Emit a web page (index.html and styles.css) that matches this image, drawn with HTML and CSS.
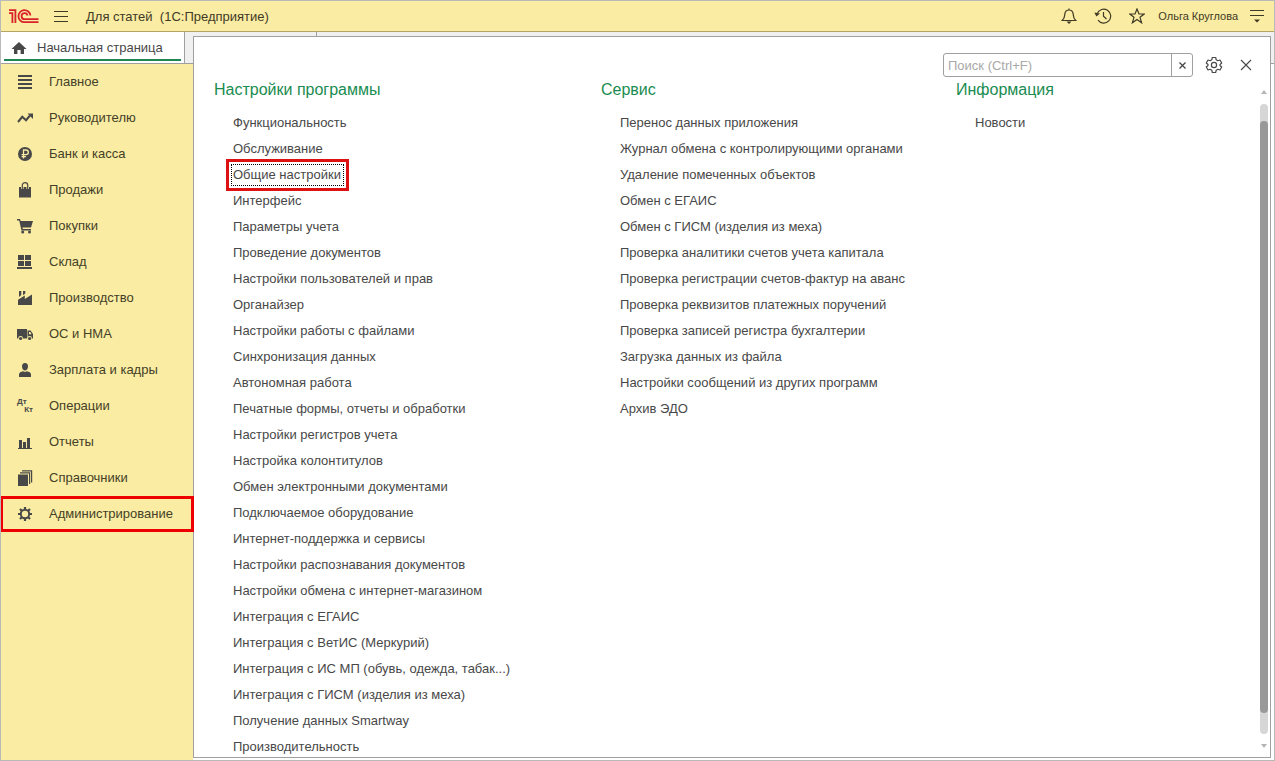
FILE: index.html
```html
<!DOCTYPE html>
<html lang="ru">
<head>
<meta charset="utf-8">
<title>Для статей (1С:Предприятие)</title>
<link rel="stylesheet" href="styles.css">
</head>
<body>
<div class="app">
  <header class="topbar">
    <svg class="logo" width="30" height="16" viewBox="0 0 30 16" fill="none" stroke="#d8232a" stroke-width="1.8">
      <path d="M0 5.200H3.400V15M0 2.200H6.400V15"/>
      <path d="M21.400 7.500A6 6 0 1 0 15.500 14.200H29.500"/>
      <path d="M18.500 7.500A3 3 0 1 0 15.500 11.200H29.500"/>
    </svg>
    <button class="icon-btn menu-btn" aria-label="Меню">
      <svg width="16" height="14" viewBox="0 0 16 14" stroke="#3f3a26" stroke-width="1"><path d="M1 1.500H15M1 6.500H15M1 11.500H15"/></svg>
    </button>
    <h1 class="title">Для статей&nbsp; (1С:Предприятие)</h1>
    <div class="tools">
      <button class="icon-btn" aria-label="Уведомления">
        <svg width="16" height="16" viewBox="0 0 16 16" fill="none" stroke="#3f3a26" stroke-width="1.200"><path d="M8 .5V2M1.300 12.500C3.200 10.800 3.600 9.500 3.800 6.400 4 3.400 5.800 2 8 2s4 1.400 4.200 4.400c.2 3.100.6 4.400 2.500 6.100Z"/><path d="M5.500 13.500H10.500L8 16Z" fill="#3f3a26" stroke="none"/></svg>
      </button>
      <button class="icon-btn" aria-label="История">
        <svg width="18" height="16" viewBox="0 0 18 16" fill="none" stroke="#3f3a26" stroke-width="1.200"><path d="M3.200 5.500A7 7 0 1 1 4 12.200M9.500 4V8.300L12.500 11"/><path d="M.3 4.600 6 5.400 2.400 8.600Z" fill="#3f3a26" stroke="none"/></svg>
      </button>
      <button class="icon-btn" aria-label="Избранное">
        <svg width="16" height="16" viewBox="0 0 16 16" fill="none" stroke="#3f3a26" stroke-width="1.200"><path d="M8 1 10 6H15.200L11 9.300 12.600 14.800 8 11.500 3.400 14.800 5 9.300.8 6H6Z"/></svg>
      </button>
      <a class="user" href="#">Ольга Круглова</a>
      <button class="icon-btn" aria-label="Сервис и настройки">
        <svg width="16" height="14" viewBox="0 0 16 14"><path d="M1 1.500H15M1 6.500H15" stroke="#3f3a26"/><path d="M5 10.500H11L8 13.500Z" fill="#3f3a26"/></svg>
      </button>
    </div>
  </header>

  <div class="workspace">
    <div class="tabs">
      <a class="tab" href="#">
        <svg width="16" height="14" viewBox="0 0 16 14" fill="#484848"><path d="M8 1 15.500 8H13V13H9.600V9H6.400V13H3V8H.5Z"/></svg>
        <span>Начальная страница</span>
      </a>
      <div class="tab-rest"></div>
    </div>

    <nav class="sidebar">
      <a class="nav-item" href="#"><svg class="nav-icon" viewBox="0 0 16 16"><path d="M1 1h14v2H1zM1 5h14v2H1zM1 9h14v2H1zM1 13h14v2H1z"/></svg>Главное</a>
      <a class="nav-item" href="#"><svg class="nav-icon" viewBox="0 0 16 16"><path d="M1 12 5.300 6.800 9 10.200 13 5.500" fill="none" stroke="#484848" stroke-width="2"/><path d="M10.500 3.500H16V9Z"/></svg>Руководителю</a>
      <a class="nav-item" href="#"><svg class="nav-icon" viewBox="0 0 16 16"><circle cx="8" cy="8" r="7"/><path d="M6.500 12.500V4H9a2.200 2.200 0 0 1 0 4.700H4.600M4.600 10.700H9" fill="none" stroke="#faeca2" stroke-width="1.300"/></svg>Банк и касса</a>
      <a class="nav-item" href="#"><svg class="nav-icon" viewBox="0 0 16 16"><path d="M2 5H14V15.500H2Z"/><path d="M5.300 7V3.500a2.600 2.600 0 0 1 5.400 0V7" fill="none" stroke="#faeca2" stroke-width="2.600"/><path d="M5.300 7V3.300a2.600 2.600 0 0 1 5.400 0V7" fill="none" stroke="#484848" stroke-width="1.200"/></svg>Продажи</a>
      <a class="nav-item" href="#"><svg class="nav-icon" viewBox="0 0 16 16"><path d="M0 1H3L3.700 3H16L14 9.500H5.500L5.800 11H14V12.400H4.500L2.200 2.400H0Z"/><circle cx="5.700" cy="14" r="1.500"/><circle cx="12.500" cy="14" r="1.500"/></svg>Покупки</a>
      <a class="nav-item" href="#"><svg class="nav-icon" viewBox="0 0 16 16"><path d="M1 1h6v5H1zM8 1h6v5H8zM1 7h6v5H1zM8 7h6v5H8zM0 13h15v2H0z"/></svg>Склад</a>
      <a class="nav-item" href="#"><svg class="nav-icon" viewBox="0 0 16 16"><path d="M1 15V9.800L7.800 5.500V9L15 4.500V15ZM2 1H4.300V5L2 7ZM6 1H8.300V3.500L6 5.200Z"/></svg>Производство</a>
      <a class="nav-item" href="#"><svg class="nav-icon" viewBox="0 0 16 16"><path d="M0 3H10V12.500H0ZM10.500 4.500H13.600L16 8V12.500H10.500Z"/><path d="M12 6H13.300L14.600 8.200H12Z" fill="#faeca2"/><circle cx="3.600" cy="12.500" r="2.400" fill="#faeca2"/><circle cx="12.600" cy="12.500" r="2.400" fill="#faeca2"/><circle cx="3.600" cy="12.500" r="1.600"/><circle cx="12.600" cy="12.500" r="1.600"/></svg>ОС и НМА</a>
      <a class="nav-item" href="#"><svg class="nav-icon" viewBox="0 0 16 16"><path d="M8 1C10 1 11 2.300 11 4.300 11 6.800 9.700 8.500 8 8.500S5 6.800 5 4.300C5 2.300 6 1 8 1ZM2 15V12.500C2 10.500 4 9.600 6 9.200L8 10 10 9.200C12 9.600 14 10.500 14 12.500V15Z"/></svg>Зарплата и кадры</a>
      <a class="nav-item" href="#"><span class="nav-icon dtkt"><b>Дт</b><b class="kt">Кт</b></span>Операции</a>
      <a class="nav-item" href="#"><svg class="nav-icon" viewBox="0 0 16 16"><path d="M1 14h14v1H1zM2 6h3v9H2zM6 8h3v7H6zM10 4h3v11h-3z"/></svg>Отчеты</a>
      <a class="nav-item" href="#"><svg class="nav-icon" viewBox="0 0 16 16"><path d="M1 4.500h10V16H1z"/><path d="M3 2.900H12.600V14M5 .9H14.600V12.500" fill="none" stroke="#484848" stroke-width="1.200"/></svg>Справочники</a>
      <a class="nav-item marked" href="#"><svg class="nav-icon" viewBox="0 0 16 16"><circle cx="8" cy="8" r="4.200" fill="none" stroke="#484848" stroke-width="2"/><path d="M8 1V4M8 12V15M1 8H4M12 8H15M3 3 5 5M11 11 13 13M13 3 11 5M5 11 3 13" stroke="#484848" stroke-width="2.200"/></svg>Администрирование</a>
    </nav>

    <main class="panel">
      <div class="panel-tools">
        <form class="search">
          <input type="text" placeholder="Поиск (Ctrl+F)" aria-label="Поиск">
          <button type="button" class="clear" aria-label="Очистить"><svg width="7" height="7" viewBox="0 0 7 7" stroke="#444" stroke-width="1.200"><path d="M.5.5 6.500 6.500M6.500.5.5 6.500"/></svg></button>
        </form>
        <button class="icon-btn" aria-label="Настройки">
          <svg width="18" height="18" viewBox="0 0 18 18" fill="none" stroke="#484848" stroke-width="1.200" stroke-linejoin="round"><path d="M7.300 1.500H10.700L11.200 3.800 12.800 4.700 15 4 16.700 7 15 8.500V9.500L16.700 11 15 14 12.800 13.300 11.200 14.200 10.700 16.500H7.300L6.800 14.200 5.200 13.300 3 14 1.300 11 3 9.500V8.500L1.300 7 3 4 5.200 4.700 6.800 3.800Z"/><circle cx="9" cy="9" r="2.600"/></svg>
        </button>
        <button class="icon-btn" aria-label="Закрыть">
          <svg width="12" height="12" viewBox="0 0 12 12" stroke="#484848" stroke-width="1.100"><path d="M1 1 11 11M11 1 1 11"/></svg>
        </button>
      </div>
      <div class="columns">
        <section>
          <h2>Настройки программы</h2>
          <ul>
            <li><a href="#">Функциональность</a></li>
            <li><a href="#">Обслуживание</a></li>
            <li><a class="focused" href="#">Общие настройки</a></li>
            <li><a href="#">Интерфейс</a></li>
            <li><a href="#">Параметры учета</a></li>
            <li><a href="#">Проведение документов</a></li>
            <li><a href="#">Настройки пользователей и прав</a></li>
            <li><a href="#">Органайзер</a></li>
            <li><a href="#">Настройки работы с файлами</a></li>
            <li><a href="#">Синхронизация данных</a></li>
            <li><a href="#">Автономная работа</a></li>
            <li><a href="#">Печатные формы, отчеты и обработки</a></li>
            <li><a href="#">Настройки регистров учета</a></li>
            <li><a href="#">Настройка колонтитулов</a></li>
            <li><a href="#">Обмен электронными документами</a></li>
            <li><a href="#">Подключаемое оборудование</a></li>
            <li><a href="#">Интернет-поддержка и сервисы</a></li>
            <li><a href="#">Настройки распознавания документов</a></li>
            <li><a href="#">Настройки обмена с интернет-магазином</a></li>
            <li><a href="#">Интеграция с ЕГАИС</a></li>
            <li><a href="#">Интеграция с ВетИС (Меркурий)</a></li>
            <li><a href="#">Интеграция с ИС МП (обувь, одежда, табак...)</a></li>
            <li><a href="#">Интеграция с ГИСМ (изделия из меха)</a></li>
            <li><a href="#">Получение данных Smartway</a></li>
            <li><a href="#">Производительность</a></li>
          </ul>
        </section>
        <section>
          <h2>Сервис</h2>
          <ul>
            <li><a href="#">Перенос данных приложения</a></li>
            <li><a href="#">Журнал обмена с контролирующими органами</a></li>
            <li><a href="#">Удаление помеченных объектов</a></li>
            <li><a href="#">Обмен с ЕГАИС</a></li>
            <li><a href="#">Обмен с ГИСМ (изделия из меха)</a></li>
            <li><a href="#">Проверка аналитики счетов учета капитала</a></li>
            <li><a href="#">Проверка регистрации счетов-фактур на аванс</a></li>
            <li><a href="#">Проверка реквизитов платежных поручений</a></li>
            <li><a href="#">Проверка записей регистра бухгалтерии</a></li>
            <li><a href="#">Загрузка данных из файла</a></li>
            <li><a href="#">Настройки сообщений из других программ</a></li>
            <li><a href="#">Архив ЭДО</a></li>
          </ul>
        </section>
        <section>
          <h2>Информация</h2>
          <ul>
            <li><a href="#">Новости</a></li>
          </ul>
        </section>
        <div class="scroll">
          <svg width="6" height="4" viewBox="0 0 6 4"><path d="M3 0 6 4H0Z" fill="#b5b5b5"/></svg>
          <div class="track"><div class="thumb"></div></div>
          <svg width="6" height="4" viewBox="0 0 6 4"><path d="M0 0H6L3 4Z" fill="#b5b5b5"/></svg>
        </div>
      </div>
    </main>
  </div>
</div>
</body>
</html>
```
FILE: styles.css
```css
* { box-sizing: border-box; }
body {
  margin: 0;
  font-family: "Liberation Sans", Arial, sans-serif;
  font-size: 13px;
  color: #484848;
}
a { color: inherit; text-decoration: none; }
.app {
  display: flex;
  flex-direction: column;
  height: 100vh;
  border: 1px solid #b9b9b9;
  overflow: hidden;
}
.icon-btn {
  display: flex;
  padding: 0;
  border: 0;
  background: none;
}
.topbar {
  display: flex;
  align-items: center;
  flex: none;
  height: 31px;
  padding: 0 9px 0 8px;
  background: #faeca2;
  border-bottom: 1px solid #b3a568;
  color: #3f3a26;
}
.menu-btn { margin: 1px 17px 0 14px; }
.title { margin: 0; font-size: 13px; font-weight: 400; }
.tools {
  display: flex;
  align-items: center;
  gap: 17px;
  margin-left: auto;
}
.user { margin: 0 -6px 0 -4px; font-size: 11px; }

.workspace {
  position: relative;
  display: flex;
  flex-direction: column;
  flex: 1;
  min-height: 0;
}
.tabs {
  display: flex;
  flex: none;
  height: 32px;
  background: #f0f0f0;
  border-bottom: 1px solid #a0a0a0;
}
.tab {
  display: flex;
  align-items: center;
  gap: 10px;
  width: 184px;
  padding: 0 3px 0 10px;
  background: linear-gradient(#1f8552, #1f8552) 3px 27px / 177px 2px no-repeat #fff;
  border-right: 1px solid #a0a0a0;
}
.tab-rest { width: 132px; border-right: 1px solid #a0a0a0; }

.sidebar {
  flex: 1;
  width: 192px;
  background: #faeca2;
}
.nav-item {
  display: flex;
  align-items: center;
  gap: 16px;
  height: 36px;
  padding: 0 0 1px 16px;
  color: #443f28;
}
.nav-icon { flex: none; width: 16px; height: 16px; fill: #484848; }
.marked {
  position: relative;
  z-index: 2;
  width: 194px;
  margin-left: -1px;
  padding-left: 17px;
  outline: 3px solid #ee0000;
  outline-offset: -3px;
}
.dtkt {
  display: flex;
  flex-direction: column;
  font-size: 8px;
  line-height: 8px;
  color: #484848;
}
.kt { align-self: flex-end; }

.panel {
  position: absolute;
  inset: 4px 3px 2px 192px;
  display: flex;
  flex-direction: column;
  background: #fff;
  border: 1px solid #a0a0a0;
  overflow: hidden;
}
.panel-tools {
  display: flex;
  align-items: center;
  justify-content: flex-end;
  flex: none;
  gap: 12px;
  padding: 16px 18px 0 0;
}
.panel-tools .icon-btn:last-child { margin-left: 5px; }
.search {
  display: flex;
  width: 250px;
  height: 24px;
  border: 1px solid #a0a0a0;
  border-radius: 3px;
}
.search input {
  flex: 1;
  min-width: 0;
  padding: 0 4px;
  border: 0;
  background: none;
  font: inherit;
  outline: 0;
}
.search input::placeholder { color: #a8a8a8; }
.clear {
  display: flex;
  align-items: center;
  justify-content: center;
  width: 21px;
  padding: 0;
  border: 0;
  border-left: 1px solid #a0a0a0;
  background: none;
}
.columns {
  display: grid;
  grid-template-columns: 387fr 355fr 302fr 12px;
  flex: 1;
  min-height: 0;
  padding-left: 20px;
}
section { min-height: 0; }
h2 {
  margin: 0;
  padding-top: 3px;
  height: 33px;
  font-size: 16px;
  line-height: 20px;
  font-weight: 400;
  color: #1a8c50;
}
ul { margin: 0; padding: 0 0 0 19px; list-style: none; }
li { height: 26px; line-height: 26px; white-space: nowrap; }
.focused {
  display: inline-block;
  margin-left: -2px;
  padding: 0 2px 0 1px;
  height: 22px;
  line-height: 20px;
  border: 1px dotted #000;
  outline: 3px solid #dd1111;
  outline-offset: 2px;
}
.scroll {
  display: flex;
  flex-direction: column;
  align-items: center;
  gap: 10px;
  min-height: 0;
  padding: 13px 0 9px;
}
.track {
  flex: 1;
  width: 8px;
  padding: 17px 0 21px;
  border-radius: 4px;
  background: #d6d6d6;
}
.thumb { height: 100%; border-radius: 4px; background: #999; }
```
